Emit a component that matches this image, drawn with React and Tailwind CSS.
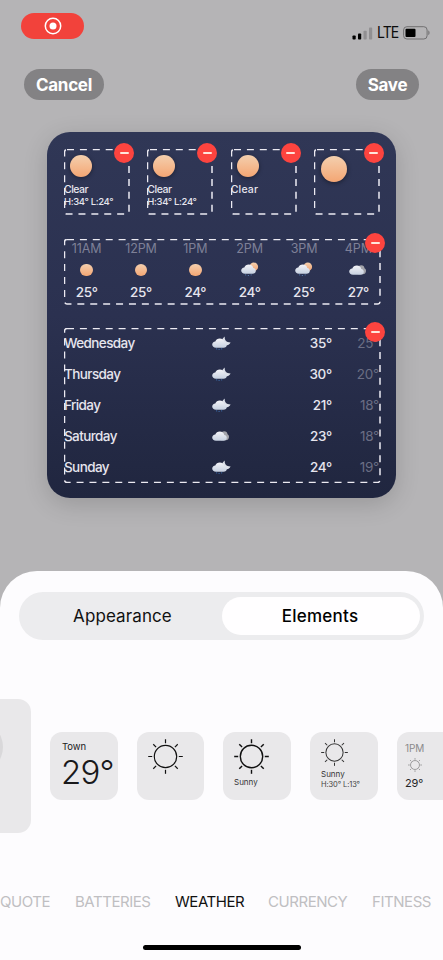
import React from "react";

function DashedFrame({ w, h }) {
  return (
    <svg className="pointer-events-none absolute inset-0" width={w} height={h} viewBox={`0 0 ${w} ${h}`} fill="none">
      <rect x="0.5" y="0.5" width={w - 1.5} height={h - 1.5} rx="2.5" stroke="#eceaf2" strokeWidth="1.5" strokeDasharray="7 5.9" />
    </svg>
  );
}

function RemoveBadge() {
  return (
    <span className="absolute -top-[6px] -right-[4px] flex size-5 items-center justify-center rounded-full bg-[#fd443f]">
      <span className="h-[2px] w-[9px] rounded-sm bg-[#ffe6dc]" />
    </span>
  );
}

function Slot({ w, h, className, children }) {
  return (
    <div className={"relative shrink-0 " + className}>
      {children}
      <DashedFrame w={w} h={h} />
      <RemoveBadge />
    </div>
  );
}

function WarmSun({ className }) {
  return <div className={"rounded-full bg-linear-to-b from-[#f3cfae] to-[#f4a673] " + className} />;
}

function Defs() {
  return (
    <svg width="0" height="0" className="absolute" aria-hidden="true">
      <defs>
        <linearGradient id="cloud" x1="0" y1="0" x2="0" y2="1">
          <stop offset="0" stopColor="#f4f4f8" />
          <stop offset="1" stopColor="#c6d0e0" />
        </linearGradient>
        <linearGradient id="warm" x1="0" y1="0" x2="0" y2="1">
          <stop offset="0" stopColor="#f5d0ae" />
          <stop offset="1" stopColor="#f0a272" />
        </linearGradient>
      </defs>
    </svg>
  );
}

const CLOUD = "M4 11.800C1.700 11.800.2 10.400.2 8.600c0-1.700 1.300-3 3.100-3.200C4 3.500 5.600 2.400 7.800 2.400c2.400 0 4.100 1.400 4.500 3.500 1.500.3 2.500 1.400 2.500 2.800 0 1.800-1.300 3.100-3.300 3.100Z";

function SunCloud() {
  return (
    <svg width="18" height="15" viewBox="0 0 18 15">
      <circle cx="12.800" cy="4.700" r="4.300" fill="url(#warm)" />
      <path d={CLOUD} fill="url(#cloud)" />
      <path d="M4 12.900h1.200M6.800 13.500h1.200M9.600 12.900h1.200" stroke="#5c86bd" strokeWidth="0.8" />
    </svg>
  );
}

function Cloudy() {
  return (
    <svg width="18" height="14" viewBox="0 0 18 14">
      <path d="M9 11.200c-1-4-.5-8.900 3.200-8.900 2 0 3.100 1.200 3.300 2.900 1 .5 1.500 1.500 1.500 2.700 0 2-1.500 3.300-3.200 3.300Z" fill="#a3a4ab" />
      <path d={CLOUD} fill="url(#cloud)" />
    </svg>
  );
}

function MoonCloud() {
  return (
    <svg width="19" height="15" viewBox="0 0 19 15">
      <path d="M12.800 .5c-.5 3.200 1.300 6 5.800 6-1.100 2.400-4 3.600-6.600 2.800C9 8.300 8.600 3.600 12.800 .5Z" fill="#dce0e9" />
      <path d={CLOUD} fill="url(#cloud)" />
      <path d="M4 12.900h1.200M6.500 13.400h1.200M9 12.900h1.200" stroke="#3f73b4" strokeWidth="0.9" />
    </svg>
  );
}

function LineSun({ size, sw, color }) {
  const rays = [0, 45, 90, 135, 180, 225, 270, 315];
  return (
    <svg width={size} height={size} viewBox="0 0 35 35" fill="none" stroke={color} strokeWidth={sw}>
      <circle cx="17.500" cy="17.500" r="11.200" />
      {rays.map((a) => (
        <path key={a} d="M17.500 .2v4" transform={`rotate(${a} 17.500 17.500)`} />
      ))}
    </svg>
  );
}

const HOURS = [
  ["11AM", "sun", "25°"],
  ["12PM", "sun", "25°"],
  ["1PM", "sun", "24°"],
  ["2PM", "suncloud", "24°"],
  ["3PM", "suncloud", "25°"],
  ["4PM", "cloud", "27°"],
];

const DAYS = [
  ["Wednesday", "moon", "35°", "25°"],
  ["Thursday", "moon", "30°", "20°"],
  ["Friday", "moon", "21°", "18°"],
  ["Saturday", "cloud", "23°", "18°"],
  ["Sunday", "moon", "24°", "19°"],
];

function StatusBar() {
  return (
    <div className="flex h-[69px] items-start justify-between pt-[13px] pr-[13px] pl-[21px]">
      <div className="flex h-[26px] w-[63px] items-center justify-center rounded-full bg-[#f2423b]">
        <svg width="18" height="18" viewBox="0 0 18 18">
          <circle cx="9" cy="9" r="7.700" fill="none" stroke="#fff" strokeWidth="1.500" />
          <circle cx="9" cy="9" r="3.500" fill="#fff" />
        </svg>
      </div>
      <div className="flex items-center pt-[11px]">
        <svg width="21" height="13" viewBox="0 0 21 13">
          <rect x="0.500" y="8.500" width="3.200" height="4" rx=".8" fill="#000" />
          <rect x="6" y="6.500" width="3.200" height="6" rx=".8" fill="#000" />
          <rect x="11.500" y="3.700" width="3.200" height="8.800" rx=".8" fill="#919092" />
          <rect x="17" y="0.600" width="3.200" height="11.900" rx=".8" fill="#919092" />
        </svg>
        <span className="ml-[4px] w-[26px] text-[14px] leading-[18px] tracking-[-0.9px] text-[#0c0c0c]">
          <span className="inline-block origin-left scale-y-110">LTE</span>
        </span>
        <svg width="27" height="14" viewBox="0 0 27 14">
          <rect x="0.600" y="0.700" width="23.500" height="12.300" rx="3.300" fill="none" stroke="#706f71" />
          <rect x="2.500" y="2.700" width="10" height="8.300" rx="1" fill="#000" />
          <path d="M25.300 4.600c1.600.6 1.600 3.900 0 4.500Z" fill="#706f71" />
        </svg>
      </div>
    </div>
  );
}

function Widget() {
  return (
    <div className="mx-[47px] flex h-[366px] flex-col gap-[23.500px] rounded-[23px] bg-linear-to-b from-[#303756] via-[#2b3150] to-[#20263f] px-[17px] pt-[17px] text-[#e6e5ee] shadow-[0_6px_24px_rgba(0,0,0,0.16)]">
      <div className="-mr-px flex h-[66px] justify-between">
        {[0, 1].map((i) => (
          <Slot key={i} w={66} h={66} className="h-[66px] w-[66px]">
            <WarmSun className="mt-[6px] ml-[6px] size-[22px] shadow-[0_1px_4px_rgba(0,0,0,0.4)]" />
            <div className="mt-[7px] text-[10.500px] leading-3 font-medium tracking-[-0.5px]">Clear</div>
            <div className="text-[9.500px] leading-3 font-medium tracking-[-0.35px] whitespace-nowrap">H:34° L:24°</div>
          </Slot>
        ))}
        <Slot w={66} h={66} className="h-[66px] w-[66px]">
          <WarmSun className="mt-[6px] ml-[6px] size-[22px] shadow-[0_1px_4px_rgba(0,0,0,0.4)]" />
          <div className="mt-[7px] text-[10.500px] leading-3 font-medium tracking-[0.2px]">Clear</div>
        </Slot>
        <Slot w={66} h={66} className="h-[66px] w-[66px]">
          <WarmSun className="mt-[7px] ml-[7px] size-[26px] shadow-[0_1px_5px_rgba(0,0,0,0.45)]" />
        </Slot>
      </div>

      <Slot w={317} h={66} className="h-[66px] w-[317px] pt-[1.500px]">
        <div className="-mx-[4.500px] grid grid-cols-6">
          {HOURS.map(([t, icon, deg]) => (
            <div key={t} className="flex flex-col items-center">
              <span className="text-[12.500px] leading-[18px] tracking-[-0.1px] text-[#7e8097]">{t}</span>
              <span className="flex h-[23.500px] items-center">
                {icon === "sun" && <WarmSun className="size-[12.500px]" />}
                {icon === "suncloud" && <SunCloud />}
                {icon === "cloud" && <Cloudy />}
              </span>
              <span className="text-[13.500px] leading-5 font-medium tracking-[-0.35px]">{deg}</span>
            </div>
          ))}
        </div>
      </Slot>

      <Slot w={317} h={155.5} className="-mt-[0.500px] h-[155.500px] w-[317px]">
        {DAYS.map(([d, icon, hi, lo]) => (
          <div key={d} className="flex h-[31px] items-center text-[13.500px] tracking-[-0.25px]">
            <span className="w-[148px] font-medium tracking-[-0.6px]">{d}</span>
            <span className="w-[19px]">{icon === "moon" ? <MoonCloud /> : <Cloudy />}</span>
            <span className="w-[101px] text-right font-medium">{hi}</span>
            <span className="w-[47px] text-right text-[#6b6e84]">{lo}</span>
          </div>
        ))}
      </Slot>
    </div>
  );
}

function Tile({ className, children }) {
  return <div className={"h-[68px] shrink-0 overflow-hidden rounded-[12px] bg-[#e9e8ea] " + className}>{children}</div>;
}

function Sheet() {
  return (
    <div className="mt-[73px] flex h-[389px] flex-col rounded-t-[37px] bg-[#fdfcfe] pt-[21px]">
      <div className="mr-[19px] ml-[19px] flex h-[48px] rounded-[24px] bg-[#ececee] p-1 text-[17px] text-[#111]">
        <div className="flex w-[199px] items-center justify-center pt-[2px] tracking-[0.1px]">Appearance</div>
        <div className="mt-px flex h-[38px] w-[198px] items-center justify-center rounded-[19px] bg-[#fffeff] pt-px pr-[2px] font-medium tracking-[0.25px] text-black">Elements</div>
      </div>

      <div className="mt-[59px] flex h-[134px] items-center overflow-hidden">
        <div className="flex h-[134px] w-[31px] shrink-0 items-start overflow-hidden rounded-r-[13px] bg-[#e9e8ea] pt-[22px]">
          <div className="-ml-[49px] size-[52px] shrink-0 rounded-full bg-[#d9d8da]" />
        </div>
        <div className="ml-[19px] flex gap-[19px]">
          <Tile className="w-[68px] pt-[9px] pl-3 text-[#19191b]">
            <div className="text-[9.500px] leading-3 tracking-[-0.1px]">Town</div>
            <div className="mt-px -ml-px text-[33px] leading-9 font-light tracking-[-0.8px] whitespace-nowrap">29°</div>
          </Tile>
          <Tile className="w-[67px] pt-[7px] pl-[11px]">
            <LineSun size={35} sw={1.2} color="#111" />
          </Tile>
          <Tile className="w-[68px] pt-[7px] pl-[11px]">
            <LineSun size={35} sw={1.4} color="#111" />
            <div className="mt-[3px] text-[8px] leading-[11px] text-[#333]">Sunny</div>
          </Tile>
          <Tile className="w-[68px] pt-[7px] pl-[11px]">
            <LineSun size={27} sw={1.3} color="#333" />
            <div className="mt-[3px] text-[8px] leading-[11px] text-[#333]">Sunny</div>
            <div className="text-[7.500px] leading-[9px] tracking-[-0.1px] whitespace-nowrap text-[#444]">H:30° L:13°</div>
          </Tile>
          <Tile className="w-[68px] pt-[9px] pl-2">
            <div className="text-[10px] leading-[14px] tracking-[-0.1px] text-[#8b8a8c]">1PM</div>
            <div className="mt-[3px] ml-[3px]">
              <LineSun size={14} sw={1.9} color="#858486" />
            </div>
            <div className="mt-[3px] text-[11px] leading-4 tracking-[-0.2px] text-[#252526]">29°</div>
          </Tile>
        </div>
      </div>

      <div className="mt-[59px] flex h-5 items-center overflow-hidden text-[15px] leading-5 tracking-[-0.45px] whitespace-nowrap text-[#c0bfc2]">
        <span className="w-[75px] shrink-0">QUOTE</span>
        <span className="w-[100px] shrink-0">BATTERIES</span>
        <span className="w-[93px] shrink-0 text-[#111]">WEATHER</span>
        <span className="w-[104px] shrink-0">CURRENCY</span>
        <span className="shrink-0">FITNESS</span>
      </div>

      <div className="mt-[33px] ml-[143px] h-[5px] w-[158px] rounded-full bg-black" />
    </div>
  );
}

export default function App() {
  return (
    <div className="flex h-[960px] w-[443px] flex-col overflow-hidden bg-[#b5b4b6] font-[Inter,'Liberation_Sans',sans-serif]">
      <Defs />
      <StatusBar />
      <div className="mb-[32px] flex h-[31px] justify-between pr-6 pl-6 text-[17px] font-bold tracking-[-0.3px] text-white">
        <div className="flex w-[80px] items-center justify-center rounded-full bg-[#838284] pt-[2px]">Cancel</div>
        <div className="flex w-[63px] items-center justify-center rounded-full bg-[#838284] pt-[2px]">Save</div>
      </div>
      <Widget />
      <Sheet />
    </div>
  );
}
